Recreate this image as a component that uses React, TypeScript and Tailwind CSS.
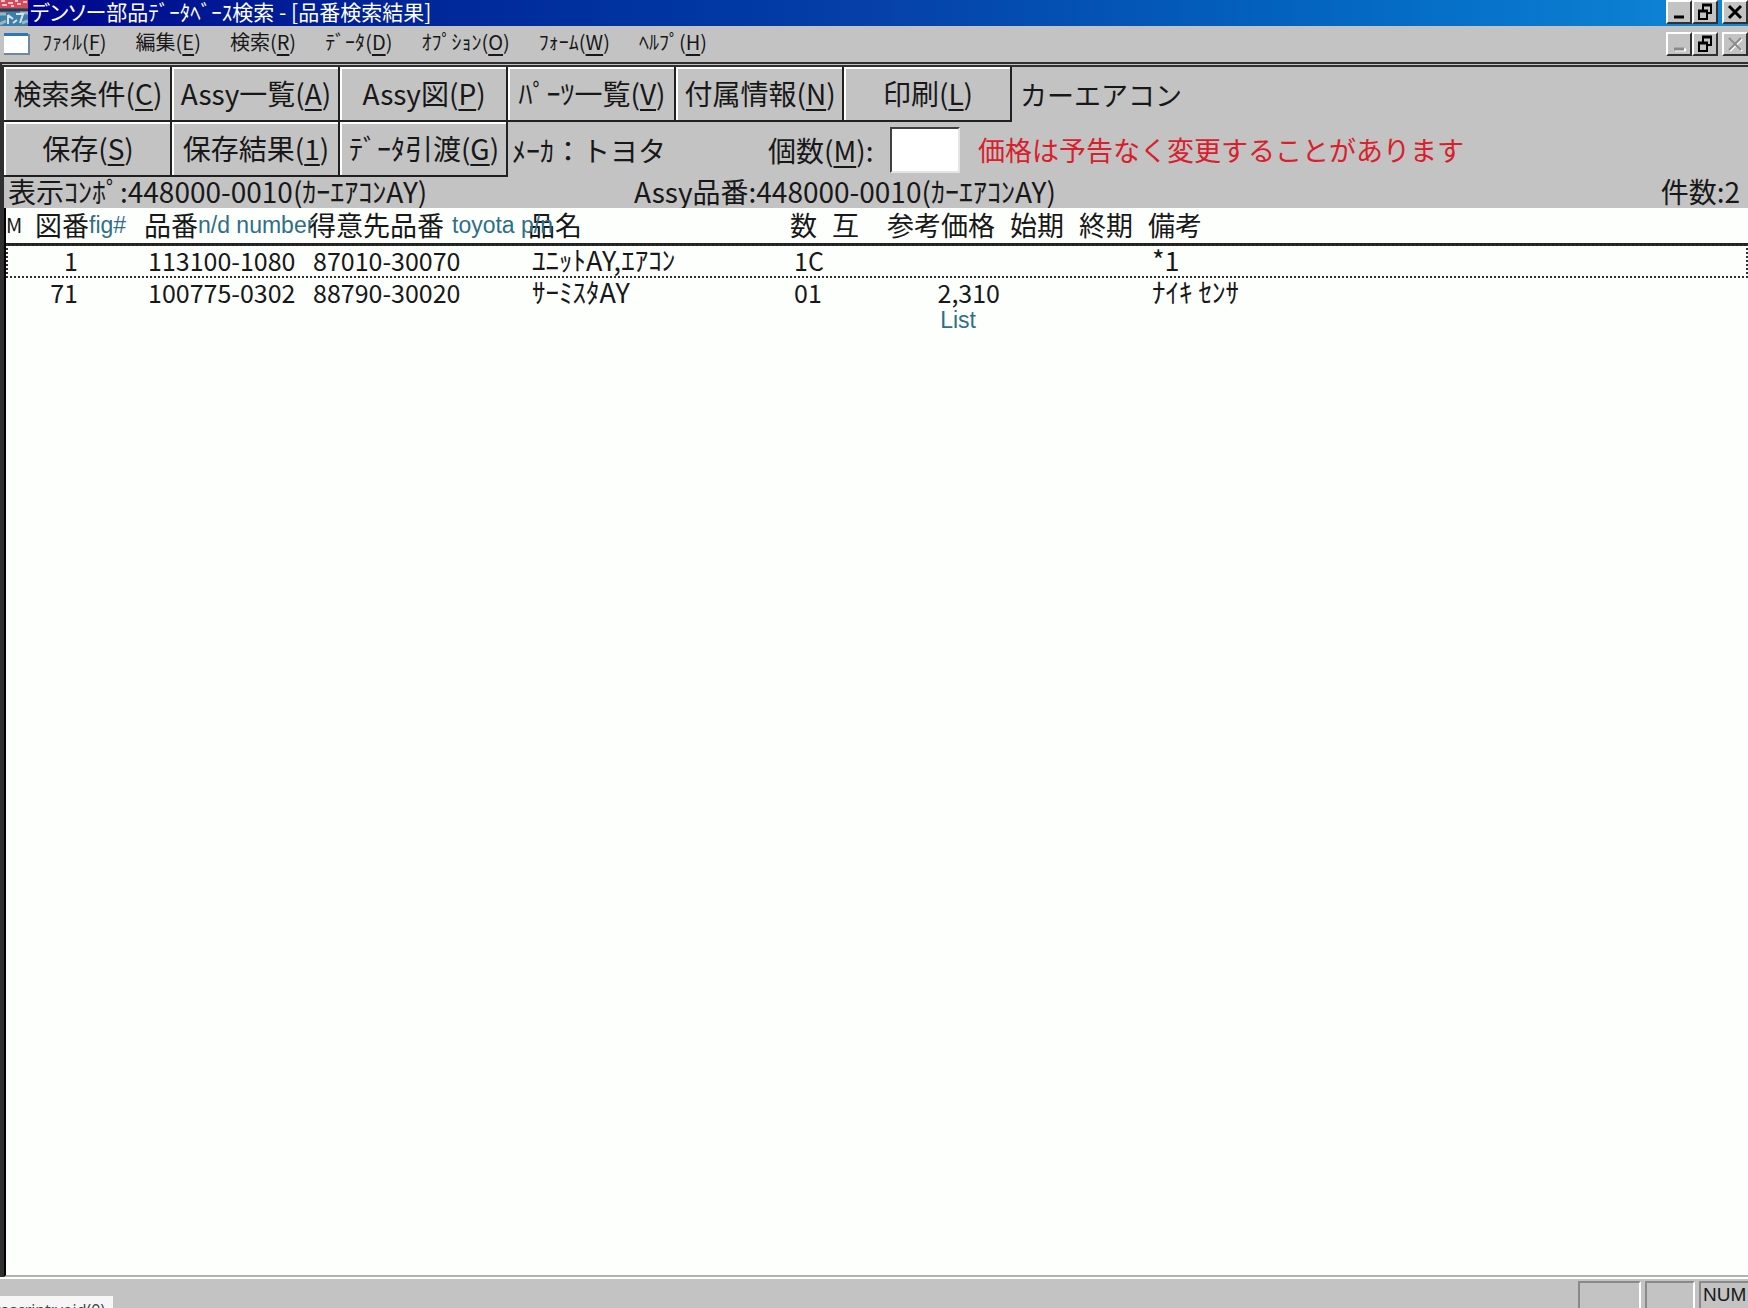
import React from "react";

const menus = [
  { label: "ﾌｧｲﾙ", hotkey: "F" },
  { label: "編集", hotkey: "E" },
  { label: "検索", hotkey: "R" },
  { label: "ﾃﾞｰﾀ", hotkey: "D" },
  { label: "ｵﾌﾟｼｮﾝ", hotkey: "O" },
  { label: "ﾌｫｰﾑ", hotkey: "W" },
  { label: "ﾍﾙﾌﾟ", hotkey: "H" },
];

const topTools = [
  { label: "検索条件", hotkey: "C" },
  { label: "Assy一覧", hotkey: "A" },
  { label: "Assy図", hotkey: "P" },
  { label: "ﾊﾟｰﾂ一覧", hotkey: "V" },
  { label: "付属情報", hotkey: "N" },
  { label: "印刷", hotkey: "L" },
];

const bottomTools = [
  { label: "保存", hotkey: "S" },
  { label: "保存結果", hotkey: "1" },
  { label: "ﾃﾞｰﾀ引渡", hotkey: "G" },
];

const rows = [
  { fig: "1", number: "113100-1080", customer: "87010-30070", name: "ﾕﾆｯﾄAY,ｴｱｺﾝ", qty: "1C", price: "", remark: "*1", note: "" },
  { fig: "71", number: "100775-0302", customer: "88790-30020", name: "ｻｰﾐｽﾀAY", qty: "01", price: "2,310", remark: "ﾅｲｷ ｾﾝｻ", note: "List" },
];

const Hotkey = ({ children }: { children: string }) => (
  <span>
    (<span className="underline decoration-2 underline-offset-4">{children}</span>)
  </span>
);

const ToolButton = ({ label, hotkey }: { label: string; hotkey: string }) => (
  <button className="w-[168px] h-[55px] shrink-0 border-r-2 border-b-2 border-[#202020] bg-[#c3c3c3]">
    <span className="flex h-full items-center justify-center border-t-2 border-l-2 border-white pb-[3px] whitespace-nowrap">
      {label}
      <Hotkey>{hotkey}</Hotkey>
    </span>
  </button>
);

const WindowButton = ({ name, children }: { name: string; children: React.ReactNode }) => (
  <button
    aria-label={name}
    className="w-[26px] h-6 flex items-center justify-center bg-[#c3c3c3] border-2 border-t-white border-l-white border-r-[#303030] border-b-[#303030]"
  >
    {children}
  </button>
);

const WindowButtons = ({ disabled }: { disabled?: boolean }) => {
  const color = disabled ? "#8a8a8a" : "#000";
  return (
    <div className="flex shrink-0">
      <WindowButton name="最小化">
        <svg width="20" height="20" viewBox="0 0 20 20">
          {disabled && <path d="M6 16h11" stroke="#fff" strokeWidth="3" />}
          <path d="M5 15h10" stroke={color} strokeWidth="3" />
        </svg>
      </WindowButton>
      <WindowButton name="元のサイズに戻す">
        <svg width="20" height="20" viewBox="0 0 20 20" fill="none" stroke="#000">
          <path d="M7 3h10" strokeWidth="3" />
          <path d="M8 3v5M16 3v8h-3" strokeWidth="2" />
          <path d="M3 9h10" strokeWidth="3" />
          <path d="M4 9v8h8V9" strokeWidth="2" />
        </svg>
      </WindowButton>
      <div className="ml-1">
        <WindowButton name="閉じる">
          <svg width="20" height="20" viewBox="0 0 20 20">
            {disabled && <path d="M5 5l12 12M17 5L5 17" stroke="#fff" strokeWidth="2" />}
            <path d="M4 4l12 12M16 4L4 16" stroke={color} strokeWidth={disabled ? 2 : 3} />
          </svg>
        </WindowButton>
      </div>
    </div>
  );
};

const TitleBar = () => (
  <header className="flex h-[26px] items-start bg-linear-to-r from-[#00008c] via-[#0640a8] to-[#1088d8] text-white">
    <svg width="28" height="26" viewBox="0 0 28 26" className="shrink-0">
      <rect width="28" height="8" fill="#d8485c" />
      <path d="M1 1h4M8 3h5M15 1h3M17 4h4M23 2h4M2 5h5M11 6h3" stroke="#f6c6cc" strokeWidth="2" />
      <rect y="8" width="28" height="18" fill="#3d7fa8" />
      <path d="M0 10h28" stroke="#3a3440" strokeWidth="3" />
      <path d="M0 14h6M20 13h8M0 24l6-3M22 23l6-2" stroke="#9fb4c0" strokeWidth="3" />
      <path d="M8 15v9M8 15l5 4M16 14h7l-3 9M13 23l4-3" stroke="#d5e4ec" strokeWidth="2" fill="none" />
    </svg>
    <h1 className="flex-1 pl-[2px] text-[21px] leading-[22px] whitespace-nowrap [font-feature-settings:'palt']">
      デンソー部品ﾃﾞｰﾀﾍﾞｰｽ検索 - [品番検索結果]
    </h1>
    <WindowButtons />
  </header>
);

const MenuBar = () => (
  <nav className="flex h-9 items-center">
    <svg width="31" height="24" viewBox="0 0 31 24" className="mr-[11px] shrink-0">
      <rect x="4" y="2" width="26" height="21" fill="#6f87a5" />
      <rect x="4" y="1" width="24" height="20" fill="#fff" />
      <rect x="4" y="1" width="24" height="3" fill="#2a78b8" />
    </svg>
    <div className="flex flex-1 gap-[29px] pb-[5px] text-[20px] leading-6">
      {menus.map((menu) => (
        <button key={menu.hotkey} className="whitespace-nowrap">
          {menu.label}
          <Hotkey>{menu.hotkey}</Hotkey>
        </button>
      ))}
    </div>
    <WindowButtons disabled />
  </nav>
);

const Toolbar = () => (
  <section className="text-[28px] leading-8 whitespace-nowrap">
    <div className="flex items-center">
      {topTools.map((tool) => (
        <ToolButton key={tool.hotkey} {...tool} />
      ))}
      <p className="pl-2 text-[27px]">カーエアコン</p>
    </div>
    <div className="flex items-center">
      {bottomTools.map((tool) => (
        <ToolButton key={tool.hotkey} {...tool} />
      ))}
      <p className="w-[260px] pl-1">ﾒｰｶ：トヨタ</p>
      <label htmlFor="count" className="w-[122px]">
        個数
        <Hotkey>M</Hotkey>:
      </label>
      <input
        id="count"
        type="text"
        className="w-[70px] h-[46px] bg-white border-2 border-t-[#404040] border-l-[#404040] border-r-[#e4e4e4] border-b-[#e4e4e4]"
      />
      <p className="pl-[18px] text-[27px] text-[#d8202c]">価格は予告なく変更することがあります</p>
    </div>
    <div className="flex h-[31px] items-center pb-[3px] pl-1">
      <p className="w-[626px]">表示ｺﾝﾎﾟ:448000-0010(ｶｰｴｱｺﾝAY)</p>
      <p className="flex-1">Assy品番:448000-0010(ｶｰｴｱｺﾝAY)</p>
      <p className="pr-2">件数:2</p>
    </div>
  </section>
);

// English captions laid over the Japanese column heads
const Caption = ({ children }: { children: string }) => (
  <span className="absolute top-1 left-full font-['Liberation_Sans'] text-[23px] text-[#2f6f86]">{children}</span>
);

const ResultTable = () => (
  <table className="w-full table-fixed border-collapse text-left text-[27px] leading-8 whitespace-nowrap">
    <colgroup>
      <col className="w-[29px]" />
      <col className="w-[109px]" />
      <col className="w-[165px]" />
      <col className="w-[219px]" />
      <col className="w-[262px]" />
      <col className="w-[42px]" />
      <col className="w-[55px]" />
      <col className="w-[123px]" />
      <col className="w-[69px]" />
      <col className="w-[69px]" />
      <col />
    </colgroup>
    <thead>
      <tr className="h-9 border-b-3 border-[#202020] [&>th]:p-0 [&>th]:font-normal">
        <th className="text-[20px]">M</th>
        <th><span className="relative">図番<Caption>fig#</Caption></span></th>
        <th><span className="relative">品番<Caption>n/d number</Caption></span></th>
        <th><span className="relative pr-2">得意先品番<Caption>toyota p/n</Caption></span></th>
        <th>品名</th>
        <th>数</th>
        <th>互</th>
        <th>参考価格</th>
        <th>始期</th>
        <th>終期</th>
        <th>備考</th>
      </tr>
    </thead>
    <tbody className="leading-7 [&_td]:p-0 [&_td]:pb-1">
      {rows.map((row) => (
        <tr key={row.fig} className="h-8 first:outline-2 first:-outline-offset-2 first:outline-dotted first:outline-[#303030]">
          <td></td>
          <td className="text-[25px]"><span className="block w-[43px] text-right">{row.fig}</span></td>
          <td className="text-[25px]"><span className="pl-1">{row.number}</span></td>
          <td className="text-[25px]"><span className="pl-1">{row.customer}</span></td>
          <td><span className="pl-1">{row.name}</span></td>
          <td className="text-[25px]"><span className="pl-1">{row.qty}</span></td>
          <td></td>
          <td className="text-[25px]">
            <span className="relative block w-[113px] text-right">
              {row.price}
              {row.note && (
                <span className="absolute top-full right-6 font-['Liberation_Sans'] text-[23px] text-[#2f6f86]">{row.note}</span>
              )}
            </span>
          </td>
          <td></td>
          <td></td>
          <td><span className="pl-1">{row.remark}</span></td>
        </tr>
      ))}
    </tbody>
  </table>
);

const StatusBar = () => (
  <footer className="relative flex h-[31px] items-end justify-end gap-1 border-t-2 border-white text-[19px] leading-6">
    <div className="w-[63px] h-[27px] border-2 border-b-0 border-[#8a8a8a] border-r-white"></div>
    <div className="w-[50px] h-[27px] border-2 border-b-0 border-[#8a8a8a] border-r-white"></div>
    <div className="w-[49px] h-[27px] border-2 border-b-0 border-r-0 border-[#8a8a8a] pl-[2px] font-['Liberation_Sans']">NUM</div>
    <div className="absolute bottom-0 left-0 flex h-3 w-[113px] justify-end overflow-hidden bg-[#f6f6f6] pr-2 pt-1 font-['Open_Sans'] text-base leading-5 text-[#404040]">
      javascript:void(0)
    </div>
  </footer>
);

const App = () => {
  return (
    <div className="flex min-h-screen flex-col overflow-hidden bg-[#c3c3c3] font-['Noto_Sans_CJK_JP',sans-serif] text-[#181818]">
      <TitleBar />
      <MenuBar />
      <main className="flex flex-1 flex-col border-t-5 border-l-4 border-[#303030] [border-style:double_solid_solid_solid]">
        <Toolbar />
        <div className="flex-1 border-b-2 border-l-2 border-b-[#b0b0b0] border-l-black bg-[#fdfffd]">
          <ResultTable />
        </div>
      </main>
      <StatusBar />
    </div>
  );
};

export default App;
